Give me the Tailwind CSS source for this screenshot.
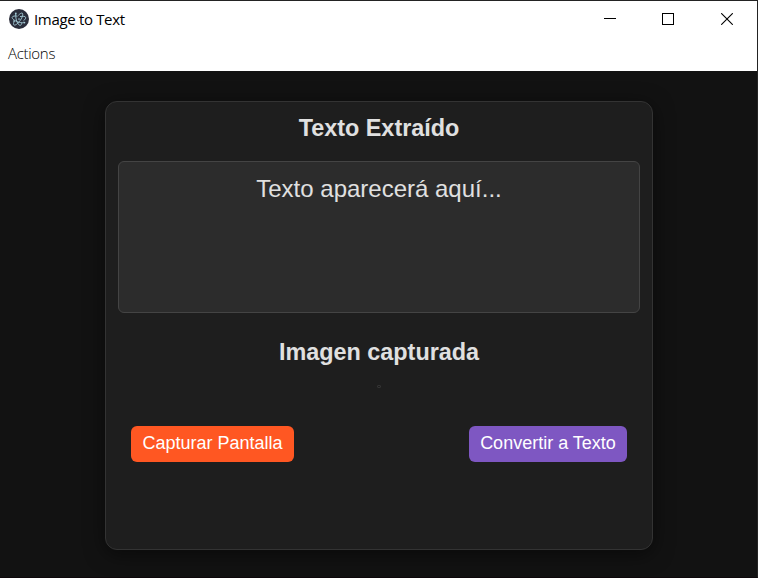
<!DOCTYPE html>
<html lang="es">
<head>
<meta charset="utf-8">
<title>Image to Text</title>
<script src="https://cdn.jsdelivr.net/npm/@tailwindcss/browser@4"></script>
</head>
<body class="h-[578px] w-[758px] overflow-hidden bg-[#121212]">
<div class="flex h-[578px] w-[758px] flex-col border-t border-r border-b border-t-[#232323] border-r-[#232323] border-b-[#0e080b] bg-[#121212]">
  <header class="h-[70px] shrink-0 bg-white font-['Open_Sans',sans-serif] text-black">
    <div class="flex h-[36px] items-center pl-[9px]">
      <svg class="size-[20px] shrink-0" viewBox="0 0 20 20" fill="none">
        <circle cx="10" cy="10" r="10" fill="#2b2e3b"/>
        <g stroke="#a4cbd6" stroke-opacity=".9" stroke-width="1" stroke-linecap="round">
          <path d="M8.1 7.1C5.6 6.7 3.7 7.1 3.2 8.1C2.7 9.4 5.1 11.5 8.6 12.8C10.8 13.6 12.9 13.9 14.4 13.7"/>
          <path d="M5.4 12.1C4.4 13.9 4.2 15.3 4.9 15.9C6 16.8 9 14.7 11.3 11.4C13.5 8.2 14.4 4.9 13.3 4.2C12.5 3.7 11 4.6 9.6 6.1"/>
          <path d="M14.7 11.7C16.2 10.4 17 9.1 16.6 8.2C16.2 7.3 14.1 7 11.4 7.5"/>
          <path d="M6.7 5.3C6.5 8.1 7.2 11.6 8.6 14C9.6 15.8 10.7 16.7 11.6 16.3C12.1 16 12.5 15.3 12.8 14.4"/>
        </g>
        <g fill="#a4cbd6"><circle cx="10" cy="10.1" r=".8"/><circle cx="4.9" cy="12" r=".8"/><circle cx="15.4" cy="13.6" r=".9"/><circle cx="6.8" cy="4.5" r=".9"/></g>
      </svg>
      <span class="ml-[5px] text-[15px] leading-5 tracking-[-0.33px] whitespace-nowrap">Image to Text</span>
      <div class="ml-auto flex items-center gap-[46px] pr-[24px]">
        <svg class="size-[12px]" viewBox="0 0 12 12" shape-rendering="crispEdges"><path d="M0 5h12v1H0z" fill="#000"/></svg>
        <svg class="size-[12px]" viewBox="0 0 12 12" fill="none" shape-rendering="crispEdges"><path d="M.5 .5h11v11H.5z" stroke="#000"/></svg>
        <svg class="ml-[1px] size-[12px]" viewBox="0 0 12 12" fill="none"><path d="M.2 .2l11.6 11.6M11.8 .2L.2 11.8" stroke="#000" stroke-width="1.1"/></svg>
      </div>
    </div>
    <nav class="flex h-[34px] items-center pb-[1px] pl-[8px] text-[15px] font-[350] tracking-[-0.3px] text-black">Actions</nav>
  </header>
  <main class="flex grow justify-center pt-[30px] font-['Liberation_Sans',Arial,sans-serif] text-[#e0e0e0]">
    <section class="ml-px flex h-[449px] w-[548px] flex-col items-center rounded-[12px] border border-[#333] bg-[#1e1e1e] px-[12px] pt-[12px] shadow-[0_4px_20px_rgba(0,0,0,0.5)]">
      <h2 class="text-[23.4px] leading-[28px] font-bold">Texto Extraído</h2>
      <div class="mt-[19px] h-[152px] w-full rounded-[6px] border border-[#444] bg-[#2c2c2c] pt-[13px] text-center text-[24px] leading-[28px]">Texto aparecerá aquí...</div>
      <h2 class="mt-[25px] text-[23.4px] leading-[28px] font-bold">Imagen capturada</h2>
      <div class="mt-[19px] h-[3px] w-[4px] rounded-[1px] border border-[#333]"></div>
      <div class="mt-[38px] flex w-full justify-between px-[13px] text-[18px] leading-[20px] text-white">
        <button class="h-[36px] w-[163px] rounded-[6px] bg-[#ff5722] pb-[2px] whitespace-nowrap">Capturar Pantalla</button>
        <button class="h-[36px] w-[158px] rounded-[6px] bg-[#7e57c2] pb-[2px] whitespace-nowrap">Convertir a Texto</button>
      </div>
    </section>
  </main>
</div>
</body>
</html>
